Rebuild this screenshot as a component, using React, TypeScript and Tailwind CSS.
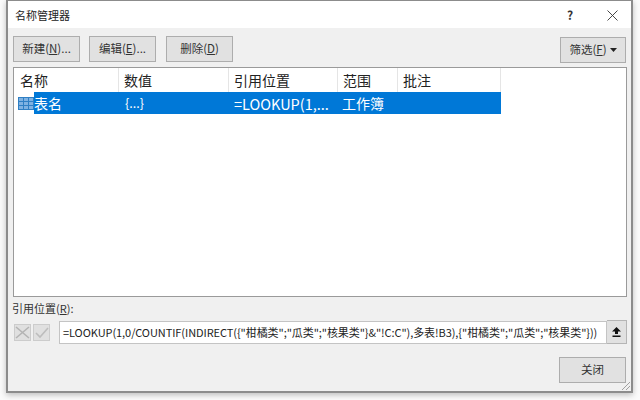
import type { ReactNode } from 'react';

const font = { fontFamily: '"Microsoft YaHei","Noto Sans CJK SC","Noto Sans",sans-serif' };

function Btn({ children, className }: { children: ReactNode; className: string }) {
  return (
    <div className={`flex items-center justify-center bg-[#e1e1e1] border border-[#adadad] text-[11.5px] text-[#333] ${className}`}>
      {children}
    </div>
  );
}

function Grid() {
  return (
    <svg width="16" height="13" viewBox="0 0 16 13" className="shrink-0">
      <rect x="0.5" y="0.5" width="15" height="12" fill="#7fb2e2" stroke="#2f7fc4" />
      <path d="M0 4.5H16M0 8.5H16M5.5 0V13M10.5 0V13" stroke="#2f7fc4" strokeWidth="1" />
    </svg>
  );
}

const cols: [string, string][] = [
  ['w-[110px]', '数值'],
  ['w-[109px]', '引用位置'],
  ['w-[60px]', '范围'],
  ['w-[103px]', '批注'],
];

const formula = '=LOOKUP(1,0/COUNTIF(INDIRECT({"柑橘类";"瓜类";"核果类"}&"!C:C"),多表!B3),{"柑橘类";"瓜类";"核果类"}))';

export default function App() {
  return (
    <div style={font} className="w-[640px] h-[400px] overflow-hidden bg-[#fbfbfb] pl-[6px] pr-[7px] pb-[7px]">
      <div className="w-[627px] h-[393px] border-2 border-t border-[#8c8c8c] bg-[#f0f0f0] flex flex-col shadow-[0_2px_6px_rgba(0,0,0,0.25)] relative">
        <div className="h-[27px] bg-white flex items-center shrink-0 pl-[7px] pt-[1px]">
          <span className="text-[11px] text-[#222] flex-1">名称管理器</span>
          <span className="text-[12px] font-bold text-[#333] w-[16px] mr-[29px] text-center">?</span>
          <svg width="11" height="11" viewBox="0 0 11 11" className="mr-[13px]">
            <path d="M0.5 0.5L10.5 10.5M10.5 0.5L0.5 10.5" stroke="#333" strokeWidth="0.9" fill="none" />
          </svg>
        </div>
        <div className="flex pl-[5px] pr-[5px] pt-[8px] shrink-0">
          <Btn className="w-[67px] h-[26px]">新建(<u>N</u>)...</Btn>
          <Btn className="w-[67px] h-[26px] ml-[9px]">编辑(<u>E</u>)...</Btn>
          <Btn className="w-[67px] h-[26px] ml-[10px]">删除(<u>D</u>)</Btn>
          <Btn className="w-[66px] h-[26px] ml-auto mt-[1px] gap-[3px]">
            <span>筛选(<u>F</u>)</span>
            <svg width="7" height="4" viewBox="0 0 7 4"><path d="M0 0H7L3.5 4Z" fill="#222" /></svg>
          </Btn>
        </div>
        <div className="mx-[5px] mt-[4px] h-[230px] w-[614px] border border-[#9a9a9a] bg-white shrink-0">
          <div className="flex h-[24px] w-[487px]">
            <div className="w-[105px] pl-[6px] text-[14px] text-[#222] flex items-center border-r border-[#e5e5e5]">名称</div>
            {cols.map(([w, t]) => (
              <div key={t} className={`${w} pl-[5px] text-[14px] text-[#222] flex items-center border-r border-[#e5e5e5]`}>{t}</div>
            ))}
          </div>
          <div className="flex items-center h-[22px]">
            <div className="w-[20px] pl-[4px] shrink-0 flex"><Grid /></div>
            <div className="flex items-center h-[22px] w-[467px] bg-[#0078d7] text-white text-[14px] pt-[1px]">
              <div className="w-[85px]">表名</div>
              <div className="w-[110px] pl-[6px] text-[12.5px]">{'{...}'}</div>
              <div className="w-[109px] pl-[5px] text-[14.5px] whitespace-nowrap">=LOOKUP(1,...</div>
              <div className="w-[60px] pl-[4px]">工作簿</div>
            </div>
          </div>
        </div>
        <div className="pl-[4px] mt-[3px] h-[17px] text-[11px] text-[#333] flex items-center shrink-0">
          <span>引用位置(<u>R</u>):</span>
        </div>
        <div className="flex items-center pl-[6px] pr-[6px] mt-[3px] shrink-0">
          <div className="w-[17px] h-[17px] bg-[#e0e0e0] border border-[#cccccc] flex items-center justify-center shrink-0">
            <svg width="15" height="15" viewBox="0 0 15 15"><path d="M1 2L14 13M14 2L1 13" stroke="#b4b4b4" strokeWidth="1.6" fill="none" /></svg>
          </div>
          <div className="w-[17px] h-[17px] ml-[2px] bg-[#e0e0e0] border border-[#cccccc] flex items-center justify-center shrink-0">
            <svg width="15" height="15" viewBox="0 0 15 15"><path d="M2 8L6 12L14 3" stroke="#bdbdbd" strokeWidth="1.6" fill="none" /></svg>
          </div>
          <div className="ml-[9px] w-[548px] h-[23px] bg-white border border-[#c4c4c4] flex items-center pl-[3px] text-[11px] tracking-[-0.07px] text-[#222] whitespace-nowrap overflow-hidden shrink-0">
            {formula}
          </div>
          <div className="w-[20px] h-[24px] bg-[#e1e1e1] border border-[#b5b5b5] border-l-0 flex items-center justify-center shrink-0">
            <svg width="9" height="10" viewBox="0 0 9 10"><path d="M4.5 0L9 4.5H6V7H3V4.5H0ZM0.5 8.5H8.5V10H0.5Z" fill="#111" /></svg>
          </div>
        </div>
        <div className="flex justify-end pr-[5px] mt-[13px] shrink-0">
          <Btn className="w-[67px] h-[26px]">关闭</Btn>
        </div>
        <svg width="10" height="10" viewBox="0 0 10 10" className="absolute right-0 bottom-0">
          <path d="M9 1L1 9M9 5L5 9" stroke="#a0a0a0" strokeWidth="1" fill="none" />
        </svg>
      </div>
    </div>
  );
}
